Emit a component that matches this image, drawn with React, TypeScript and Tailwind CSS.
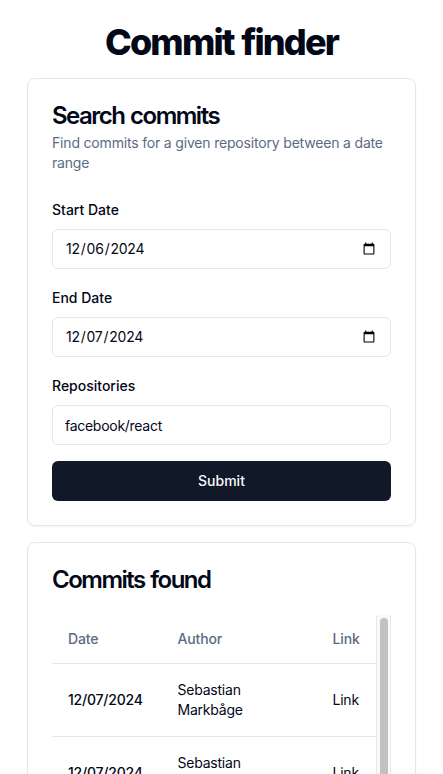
import { ReactNode } from "react";

const commits = [
  { date: "12/07/2024", author: "Sebastian Markbåge" },
  { date: "12/07/2024", author: "Sebastian Markbåge" },
  { date: "12/07/2024", author: "Sebastian Markbåge" },
];

const inputClass =
  "block h-10 w-full rounded-md border border-[#e2e8f0] bg-white px-3 py-2 text-sm text-[#020817] outline-none";

function Card({ children }: { children: ReactNode }) {
  return (
    <section className="rounded-lg border border-[#e2e8f0] bg-white shadow-xs">
      {children}
    </section>
  );
}

function CardTitle({ children }: { children: ReactNode }) {
  return (
    <h2 className="relative top-px text-2xl leading-none font-semibold tracking-[-1.5px] [word-spacing:1px]">
      {children}
    </h2>
  );
}

function Field({ label, id, children }: { label: string; id: string; children: ReactNode }) {
  return (
    <div className="space-y-2">
      <div>
        <label htmlFor={id} className="text-sm leading-none font-medium">
          {label}
        </label>
      </div>
      {children}
    </div>
  );
}

export default function App() {
  return (
    <main className="h-[774px] overflow-hidden bg-white px-[27px] pt-[22px] font-['Inter',sans-serif] text-[#020817]">
      <h1 className="text-center text-4xl font-extrabold tracking-[-1.85px] [word-spacing:1.5px]">
        Commit finder
      </h1>
      <div className="mt-4 flex flex-col gap-4">
        <Card>
          <header className="flex flex-col gap-1.5 p-6">
            <CardTitle>Search commits</CardTitle>
            <p className="text-sm tracking-[-0.18px] text-[#5b6b84]">
              Find commits for a given repository between a date range
            </p>
          </header>
          <form className="space-y-4 p-6 pt-0" onSubmit={(e) => e.preventDefault()}>
            <Field label="Start Date" id="start">
              <input
                id="start"
                type="date"
                defaultValue="2024-12-06"
                className={`${inputClass} tracking-[-0.24px]`}
              />
            </Field>
            <Field label="End Date" id="end">
              <input
                id="end"
                type="date"
                defaultValue="2024-12-07"
                className={`${inputClass} tracking-[-0.26px]`}
              />
            </Field>
            <Field label="Repositories" id="repos">
              <input
                id="repos"
                type="text"
                defaultValue="facebook/react"
                className={`${inputClass} tracking-[-0.28px]`}
              />
            </Field>
            <button className="flex h-10 w-full items-center justify-center rounded-md bg-[#111827] text-sm font-medium text-[#f8fafc]">
              Submit
            </button>
          </form>
        </Card>
        <Card>
          <header className="p-6">
            <CardTitle>Commits found</CardTitle>
          </header>
          <div className="flex h-[400px] overflow-hidden px-6">
            <div className="min-w-0 flex-1">
              <table className="w-full table-fixed border-collapse text-sm">
                <colgroup>
                  <col className="w-[109.5px]" />
                  <col className="w-[155px]" />
                  <col />
                </colgroup>
                <thead>
                  <tr className="border-b border-[#e2e8f0] text-left tracking-[-0.15px] text-[#5b6b84]">
                    <th className="h-12 px-4 font-medium">Date</th>
                    <th className="h-12 px-4 font-medium">Author</th>
                    <th className="h-12 pl-4 font-medium">Link</th>
                  </tr>
                </thead>
                <tbody>
                  {commits.map((c, i) => (
                    <tr key={i} className="border-b border-[#e2e8f0] tracking-[-0.22px]">
                      <td className="py-4 pl-4 font-medium">{c.date}</td>
                      <td className="p-4 pr-14">{c.author}</td>
                      <td className="py-4 pl-4">Link</td>
                    </tr>
                  ))}
                </tbody>
              </table>
            </div>
            <div className="flex w-[15px] justify-center border-x border-[#e8e8e8] bg-[#fafafa] pt-[3px]">
              <div className="h-[220px] w-2 rounded-full bg-[#c1c1c1]" />
            </div>
          </div>
        </Card>
      </div>
    </main>
  );
}
